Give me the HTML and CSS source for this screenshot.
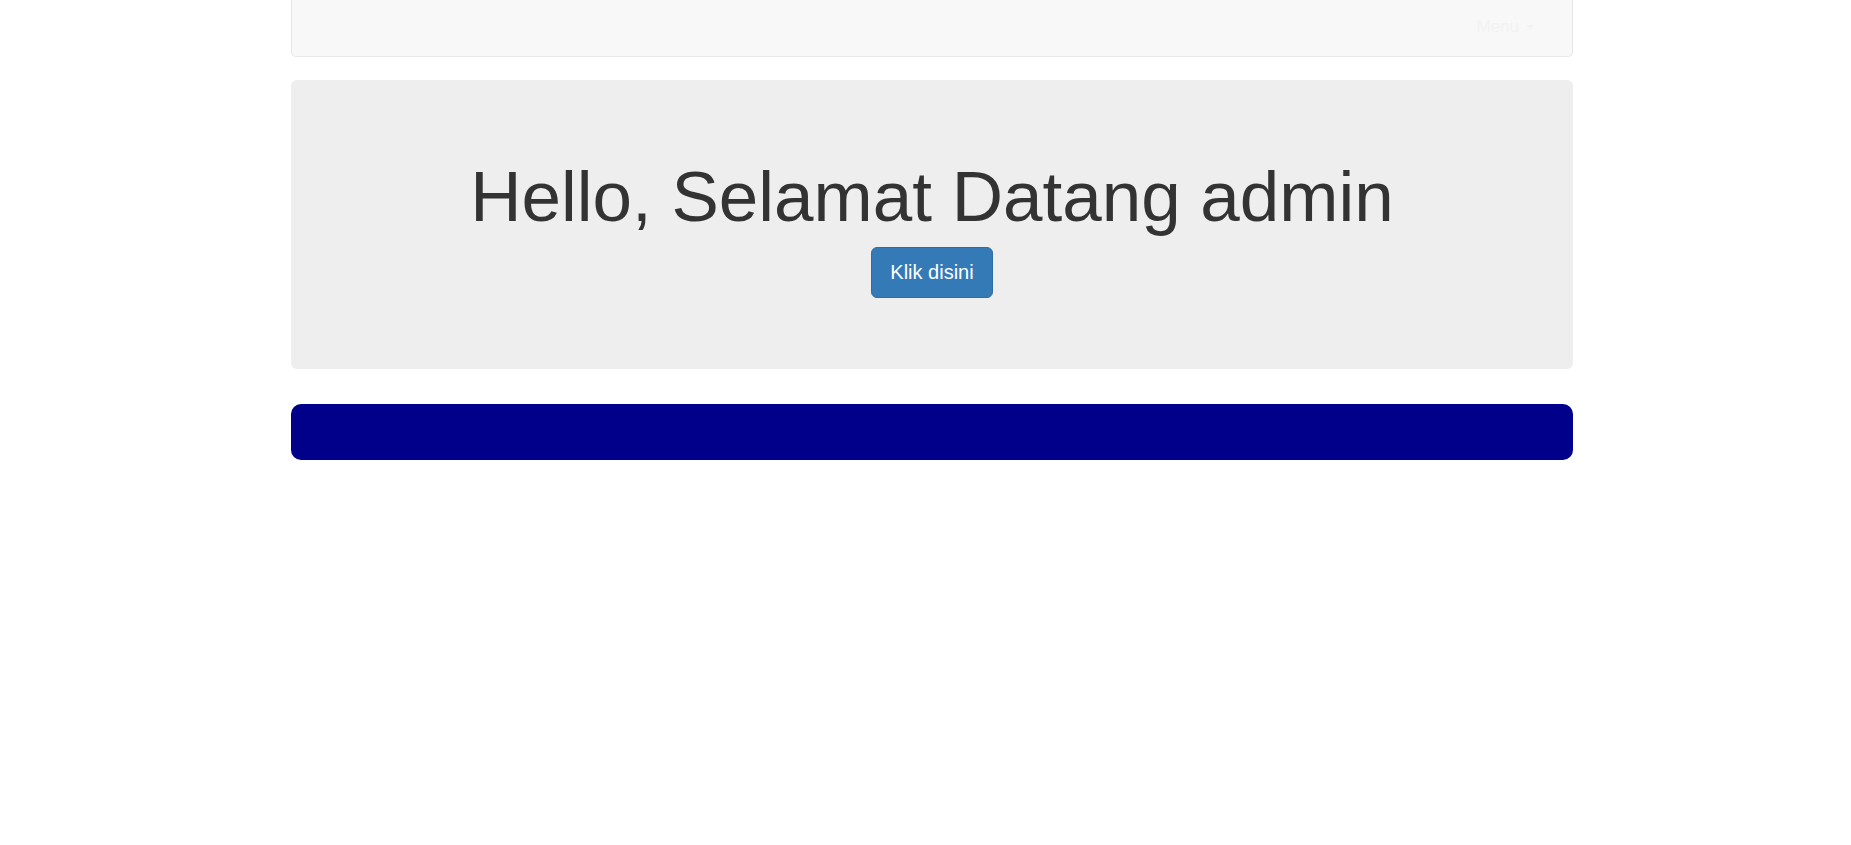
FILE: index.html
```html
<!DOCTYPE html>
<html>
<head>
<meta charset="utf-8">
<link rel="stylesheet" href="styles.css">
</head>
<body>
<div class="page">
  <nav class="navbar">
    <span class="menu">Menu <span class="caret"></span></span>
  </nav>
  <div class="jumbotron">
    <h1 class="title">Hello, Selamat Datang admin</h1>
    <a class="btn">Klik disini</a>
  </div>
  <div class="bluebar"></div>
</div>
</body>
</html>
```
FILE: styles.css
```css
html, body {
  margin: 0;
  padding: 0;
  background: #ffffff;
  font-family: "Liberation Sans", Arial, sans-serif;
  color: #333333;
}
.page {
  width: 1282px;
  margin-left: 291px;
  display: flex;
  flex-direction: column;
}
.navbar {
  box-sizing: border-box;
  height: 57px;
  background: #f8f8f8;
  border: 1px solid #e7e7e7;
  border-top: none;
  border-radius: 0 0 5px 5px;
  display: flex;
  justify-content: flex-end;
  align-items: center;
  padding: 0 38px 2px 0;
}
.menu {
  font-size: 17px;
  color: #f2f2f2;
  display: flex;
  align-items: center;
  gap: 7px;
}
.caret {
  display: inline-block;
  width: 0;
  height: 0;
  border-left: 4px solid transparent;
  border-right: 4px solid transparent;
  border-top: 4px solid #f2f2f2;
}
.jumbotron {
  margin-top: 23px;
  background: #eeeeee;
  border-radius: 6px;
  padding: 78px 0 71px;
  display: flex;
  flex-direction: column;
  align-items: center;
}
.title {
  margin: 0;
  font-size: 71px;
  font-weight: 400;
  line-height: 78px;
  color: #333333;
}
.btn {
  margin-top: 11px;
  box-sizing: border-box;
  width: 122px;
  height: 51px;
  display: flex;
  align-items: center;
  justify-content: center;
  font-size: 20px;
  line-height: 23px;
  color: #ffffff;
  background: #337ab7;
  border: 1px solid #2e6da4;
  border-radius: 6px;
}
.bluebar {
  margin-top: 35px;
  height: 56px;
  background: #00008b;
  border-radius: 10px;
}
```
